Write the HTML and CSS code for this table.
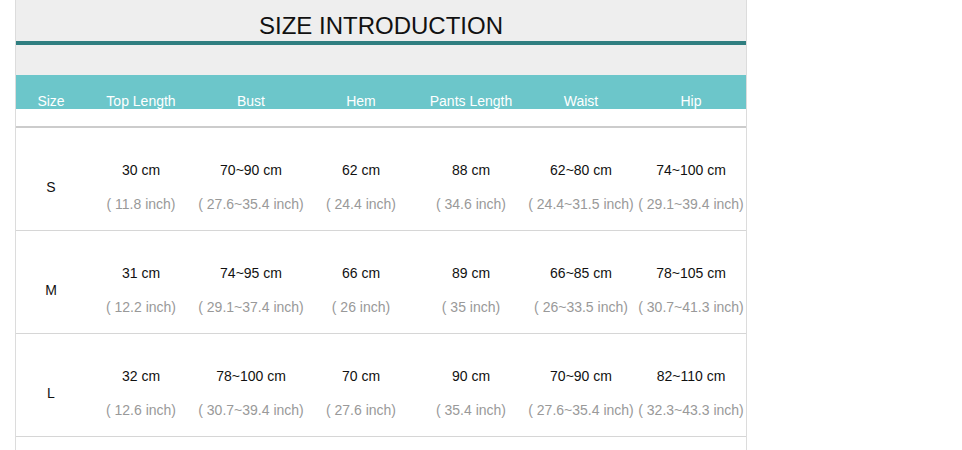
FILE: index.html
```html
<!DOCTYPE html>
<html>
<head>
<meta charset="utf-8">
<link rel="stylesheet" href="styles.css">
</head>
<body>
<div class="sheet">
  <div class="title">SIZE INTRODUCTION</div>
  <div class="rule"></div>
  <div class="spacer"></div>
  <div class="grid head">
    <div>Size</div><div>Top Length</div><div>Bust</div><div>Hem</div><div>Pants Length</div><div>Waist</div><div>Hip</div>
  </div>
  <div class="gap"></div>
  <div class="grid row">
    <div class="size">S</div>
    <div class="cell"><span class="cm">30 cm</span><span class="in">( 11.8 inch)</span></div>
    <div class="cell"><span class="cm">70~90 cm</span><span class="in">( 27.6~35.4 inch)</span></div>
    <div class="cell"><span class="cm">62 cm</span><span class="in">( 24.4 inch)</span></div>
    <div class="cell"><span class="cm">88 cm</span><span class="in">( 34.6 inch)</span></div>
    <div class="cell"><span class="cm">62~80 cm</span><span class="in">( 24.4~31.5 inch)</span></div>
    <div class="cell"><span class="cm">74~100 cm</span><span class="in">( 29.1~39.4 inch)</span></div>
  </div>
  <div class="grid row">
    <div class="size">M</div>
    <div class="cell"><span class="cm">31 cm</span><span class="in">( 12.2 inch)</span></div>
    <div class="cell"><span class="cm">74~95 cm</span><span class="in">( 29.1~37.4 inch)</span></div>
    <div class="cell"><span class="cm">66 cm</span><span class="in">( 26 inch)</span></div>
    <div class="cell"><span class="cm">89 cm</span><span class="in">( 35 inch)</span></div>
    <div class="cell"><span class="cm">66~85 cm</span><span class="in">( 26~33.5 inch)</span></div>
    <div class="cell"><span class="cm">78~105 cm</span><span class="in">( 30.7~41.3 inch)</span></div>
  </div>
  <div class="grid row">
    <div class="size">L</div>
    <div class="cell"><span class="cm">32 cm</span><span class="in">( 12.6 inch)</span></div>
    <div class="cell"><span class="cm">78~100 cm</span><span class="in">( 30.7~39.4 inch)</span></div>
    <div class="cell"><span class="cm">70 cm</span><span class="in">( 27.6 inch)</span></div>
    <div class="cell"><span class="cm">90 cm</span><span class="in">( 35.4 inch)</span></div>
    <div class="cell"><span class="cm">70~90 cm</span><span class="in">( 27.6~35.4 inch)</span></div>
    <div class="cell"><span class="cm">82~110 cm</span><span class="in">( 32.3~43.3 inch)</span></div>
  </div>
  <div class="grid row">
    <div class="size"></div>
  </div>
</div>
</body>
</html>
```
FILE: styles.css
```css
html, body {
  margin: 0;
  padding: 0;
  background: #fff;
}
body {
  font-family: "Liberation Sans", Arial, sans-serif;
  overflow: hidden;
}
.sheet {
  margin-left: 15px;
  width: 730px;
  border-left: 1px solid #dcdcdc;
  border-right: 1px solid #dcdcdc;
}
.title {
  background: #eeeeee;
  height: 41px;
  box-sizing: border-box;
  padding-top: 10px;
  line-height: 31px;
  font-size: 24px;
  color: #111;
  text-align: center;
}
.rule {
  height: 4px;
  background: #2f7e80;
}
.spacer {
  height: 30px;
  background: #eeeeee;
}
.grid {
  display: grid;
  grid-template-columns: 70px repeat(6, 110px);
}
.head {
  height: 34px;
  background: #6cc6ca;
  color: #fff;
  font-size: 14px;
  line-height: 16px;
  align-items: end;
  text-align: center;
}
.gap {
  height: 17px;
  border-bottom: 2px solid #cccccc;
}
.row {
  height: 102px;
  border-bottom: 1px solid #d6d6d6;
  font-size: 14px;
  text-align: center;
  align-items: center;
  box-sizing: content-box;
  padding-top: 0;
}
.size {
  color: #111;
  padding-top: 16px;
  line-height: 16px;
}
.cell {
  display: flex;
  flex-direction: column;
  padding-top: 16px;
  white-space: nowrap;
}
.cm {
  line-height: 34px;
  color: #111;
}
.in {
  line-height: 34px;
  color: #999999;
}
```
